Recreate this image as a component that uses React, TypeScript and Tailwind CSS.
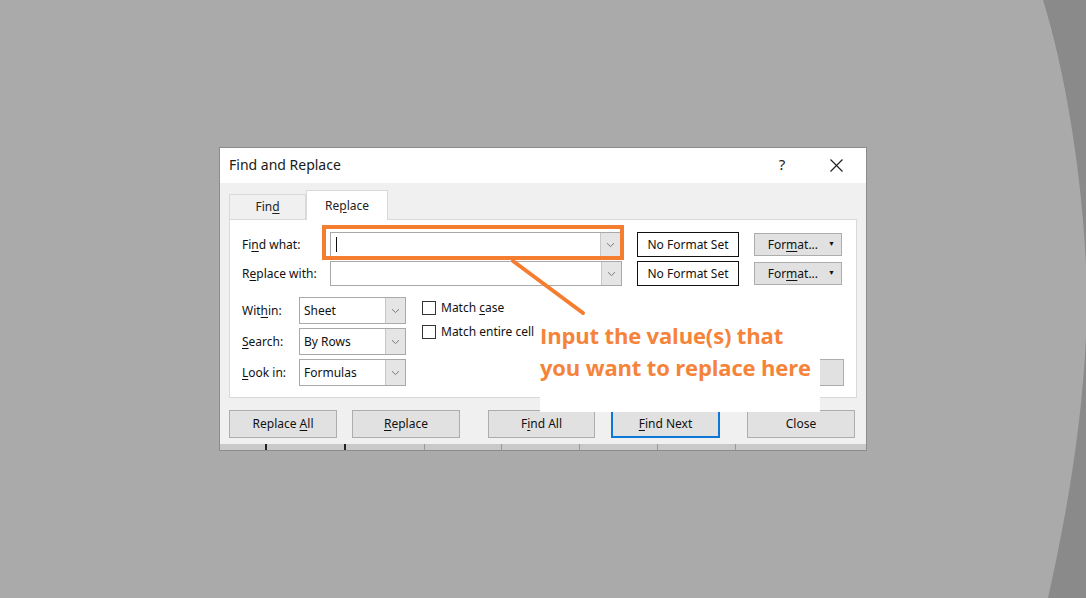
import React from "react";

const F = { fontFamily: '"Noto Sans", "Open Sans", sans-serif' };

function Chevron() {
  return (
    <svg width="9" height="6" viewBox="0 0 9 6">
      <path d="M1 1.2 L4.5 4.6 L8 1.2" fill="none" stroke="#7a7a7a" strokeWidth="1" />
    </svg>
  );
}

function Combo({ w, h, text, caret }: { w: number; h: number; text?: string; caret?: boolean }) {
  return (
    <div
      className="flex border border-[#a9a9a9] bg-white"
      style={{ width: w, height: h }}
    >
      <div className="flex-1 flex items-center pl-[4px] text-[12px] text-[#111]">
        {caret ? <span className="inline-block w-px h-[15px] bg-[#111] ml-[1px]" /> : text}
      </div>
      <div className="w-[20px] bg-[#e5e5e5] border-l border-[#c8c8c8] flex items-center justify-center">
        <Chevron />
      </div>
    </div>
  );
}

function Btn({ w, children, blue }: { w: number; children?: React.ReactNode; blue?: boolean }) {
  return (
    <div
      className={
        "h-[28px] flex items-center justify-center text-[12px] text-[#111] bg-[#e1e1e1] " +
        (blue ? "border-2 border-[#0a78d4]" : "border border-[#adadad]")
      }
      style={{ width: w }}
    >
      <span className="whitespace-pre">{children}</span>
    </div>
  );
}

function U({ children }: { children: React.ReactNode }) {
  return <span className="underline underline-offset-2">{children}</span>;
}

function FormatBtn() {
  return (
    <div className="ml-[15px] w-[88px] h-[23px] border border-[#adadad] bg-[#e1e1e1] flex items-center justify-end pr-[6px] text-[12px] text-[#111]">
      <span>
        For<U>m</U>at...
      </span>
      <span className="ml-[10px] text-[7px]">▼</span>
    </div>
  );
}

export default function App() {
  return (
    <div className="relative w-[1086px] h-[598px] overflow-hidden bg-[#aaaaaa]" style={F}>
      <svg className="absolute inset-0" width="1086" height="598" viewBox="0 0 1086 598">
        <path
          d="M1043 0 C1068 80 1086 200 1087 300 C1086 400 1070 500 1048 598 L1086 598 L1086 0 Z"
          fill="#8a8a8a"
        />
      </svg>

      <div className="relative pl-[219px] pt-[147px]">
        {/* dialog */}
        <div className="w-[648px] h-[304px] border border-[#8c8c8c] bg-[#f0f0f0] flex flex-col">
          {/* title bar */}
          <div className="h-[35px] bg-white flex items-center pl-[9px] pr-[23px]">
            <div className="flex-1 text-[14px] text-[#1a1a1a] -mt-[2px]">Find and Replace</div>
            <div className="text-[15px] text-[#222] w-[20px] text-center mr-[38px] -mt-[2px]">?</div>
            <svg width="13" height="13" viewBox="0 0 13 13">
              <path d="M0.5 0.5 L12.5 12.5 M12.5 0.5 L0.5 12.5" stroke="#222" strokeWidth="1.2" />
            </svg>
          </div>

          <div className="px-[9px] flex-1 flex flex-col">
            {/* tabs */}
            <div className="flex items-end h-[36px] pt-[6px]">
              <div className="w-[77px] h-[25px] border border-b-0 border-[#d9d9d9] bg-[#f0f0f0] flex items-center justify-center text-[12px] text-[#222]">
                <span>
                  Fin<U>d</U>
                </span>
              </div>
              <div className="w-[82px] h-[30px] border border-b-0 border-[#d9d9d9] bg-white flex items-center justify-center text-[12px] text-[#222] -mb-px relative z-10">
                <span>
                  Re<U>p</U>lace
                </span>
              </div>
            </div>

            {/* panel */}
            <div className="h-[179px] border border-[#d9d9d9] bg-white pl-[12px] pr-[12px] pt-[12px] flex flex-col">
              <div className="flex items-center h-[25px]">
                <div className="w-[88px] text-[12px] text-[#111]">
                  Fi<U>n</U>d what:
                </div>
                <Combo w={291} h={25} caret />
                <div className="ml-[16px] w-[102px] h-[25px] border border-[#111] bg-white flex items-center justify-center text-[12px] text-[#111]">
                  No Format Set
                </div>
                <FormatBtn />
              </div>
              <div className="flex items-center h-[25px] mt-[4px]">
                <div className="w-[88px] text-[12px] text-[#111]">
                  R<U>e</U>place with:
                </div>
                <Combo w={292} h={25} />
                <div className="ml-[15px] w-[102px] h-[25px] border border-[#111] bg-white flex items-center justify-center text-[12px] text-[#111]">
                  No Format Set
                </div>
                <FormatBtn />
              </div>

              <div className="flex mt-[11px]">
                <div className="flex flex-col gap-[4px]">
                  <div className="flex items-center">
                    <div className="w-[57px] text-[12px] text-[#111]">
                      Wit<U>h</U>in:
                    </div>
                    <Combo w={107} h={27} text="Sheet" />
                  </div>
                  <div className="flex items-center">
                    <div className="w-[57px] text-[12px] text-[#111]">
                      <U>S</U>earch:
                    </div>
                    <Combo w={107} h={27} text="By Rows" />
                  </div>
                  <div className="flex items-center">
                    <div className="w-[57px] text-[12px] text-[#111]">
                      <U>L</U>ook in:
                    </div>
                    <Combo w={107} h={27} text="Formulas" />
                  </div>
                </div>
                <div className="ml-[16px] pt-[4px] flex flex-col gap-[10px]">
                  <div className="flex items-center h-[14px]">
                    <div className="w-[14px] h-[14px] border border-[#333] bg-white" />
                    <span className="ml-[5px] text-[12px] text-[#111]">
                      Match <U>c</U>ase
                    </span>
                  </div>
                  <div className="flex items-center h-[14px]">
                    <div className="w-[14px] h-[14px] border border-[#333] bg-white" />
                    <span className="ml-[5px] text-[12px] text-[#111]">Match entire cell</span>
                  </div>
                </div>
                <div className="flex-1 flex justify-end items-end">
                  <div className="w-[85px] h-[27px] border border-[#adadad] bg-[#e1e1e1]" />
                </div>
              </div>
            </div>

            {/* buttons */}
            <div className="flex mt-[12px]">
              <Btn w={108}>
                Replace <U>A</U>ll
              </Btn>
              <div className="ml-[15px]">
                <Btn w={108}>
                  <U>R</U>eplace
                </Btn>
              </div>
              <div className="ml-[28px]">
                <Btn w={107}>
                  F<U>i</U>nd All
                </Btn>
              </div>
              <div className="ml-[16px]">
                <Btn w={109} blue>
                  <U>F</U>ind Next
                </Btn>
              </div>
              <div className="ml-[27px]">
                <Btn w={108}>Close</Btn>
              </div>
            </div>
            <div className="flex-1" />
          </div>
          {/* sheet strip under dialog */}
          <div className="h-[6px] bg-[#c9c9c9] flex">
            <div className="ml-[45px] w-[2px] h-full bg-[#222]" />
            <div className="ml-[77px] w-[2px] h-full bg-[#222]" />
            <div className="ml-[78px] w-px h-full bg-[#9a9a9a]" />
            <div className="ml-[76px] w-px h-full bg-[#9a9a9a]" />
            <div className="ml-[77px] w-px h-full bg-[#9a9a9a]" />
            <div className="ml-[77px] w-px h-full bg-[#9a9a9a]" />
            <div className="ml-[77px] w-px h-full bg-[#9a9a9a]" />
          </div>
        </div>
      </div>

      {/* orange highlight box */}
      <div className="absolute left-[322px] top-[225px] w-[302px] h-[35px] border-4 border-[#f47d30]" />
      {/* arrow line */}
      <svg className="absolute left-0 top-0" width="1086" height="598" viewBox="0 0 1086 598">
        <line x1="513" y1="261" x2="583" y2="313" stroke="#f47d30" strokeWidth="4" strokeLinecap="round" />
      </svg>
      {/* callout text box */}
      <div className="absolute left-[540px] top-[320px] w-[280px] h-[92px] bg-white">
        <div
          className="text-[22px] leading-[32px] font-bold text-[#f5843a] whitespace-nowrap tracking-[-0.15px] -mt-[1px]"
          style={{ fontFamily: '"Open Sans", "Noto Sans", sans-serif' }}
        >
          <div>Input the value(s) that</div>
          <div>you want to replace here</div>
        </div>
      </div>
    </div>
  );
}
